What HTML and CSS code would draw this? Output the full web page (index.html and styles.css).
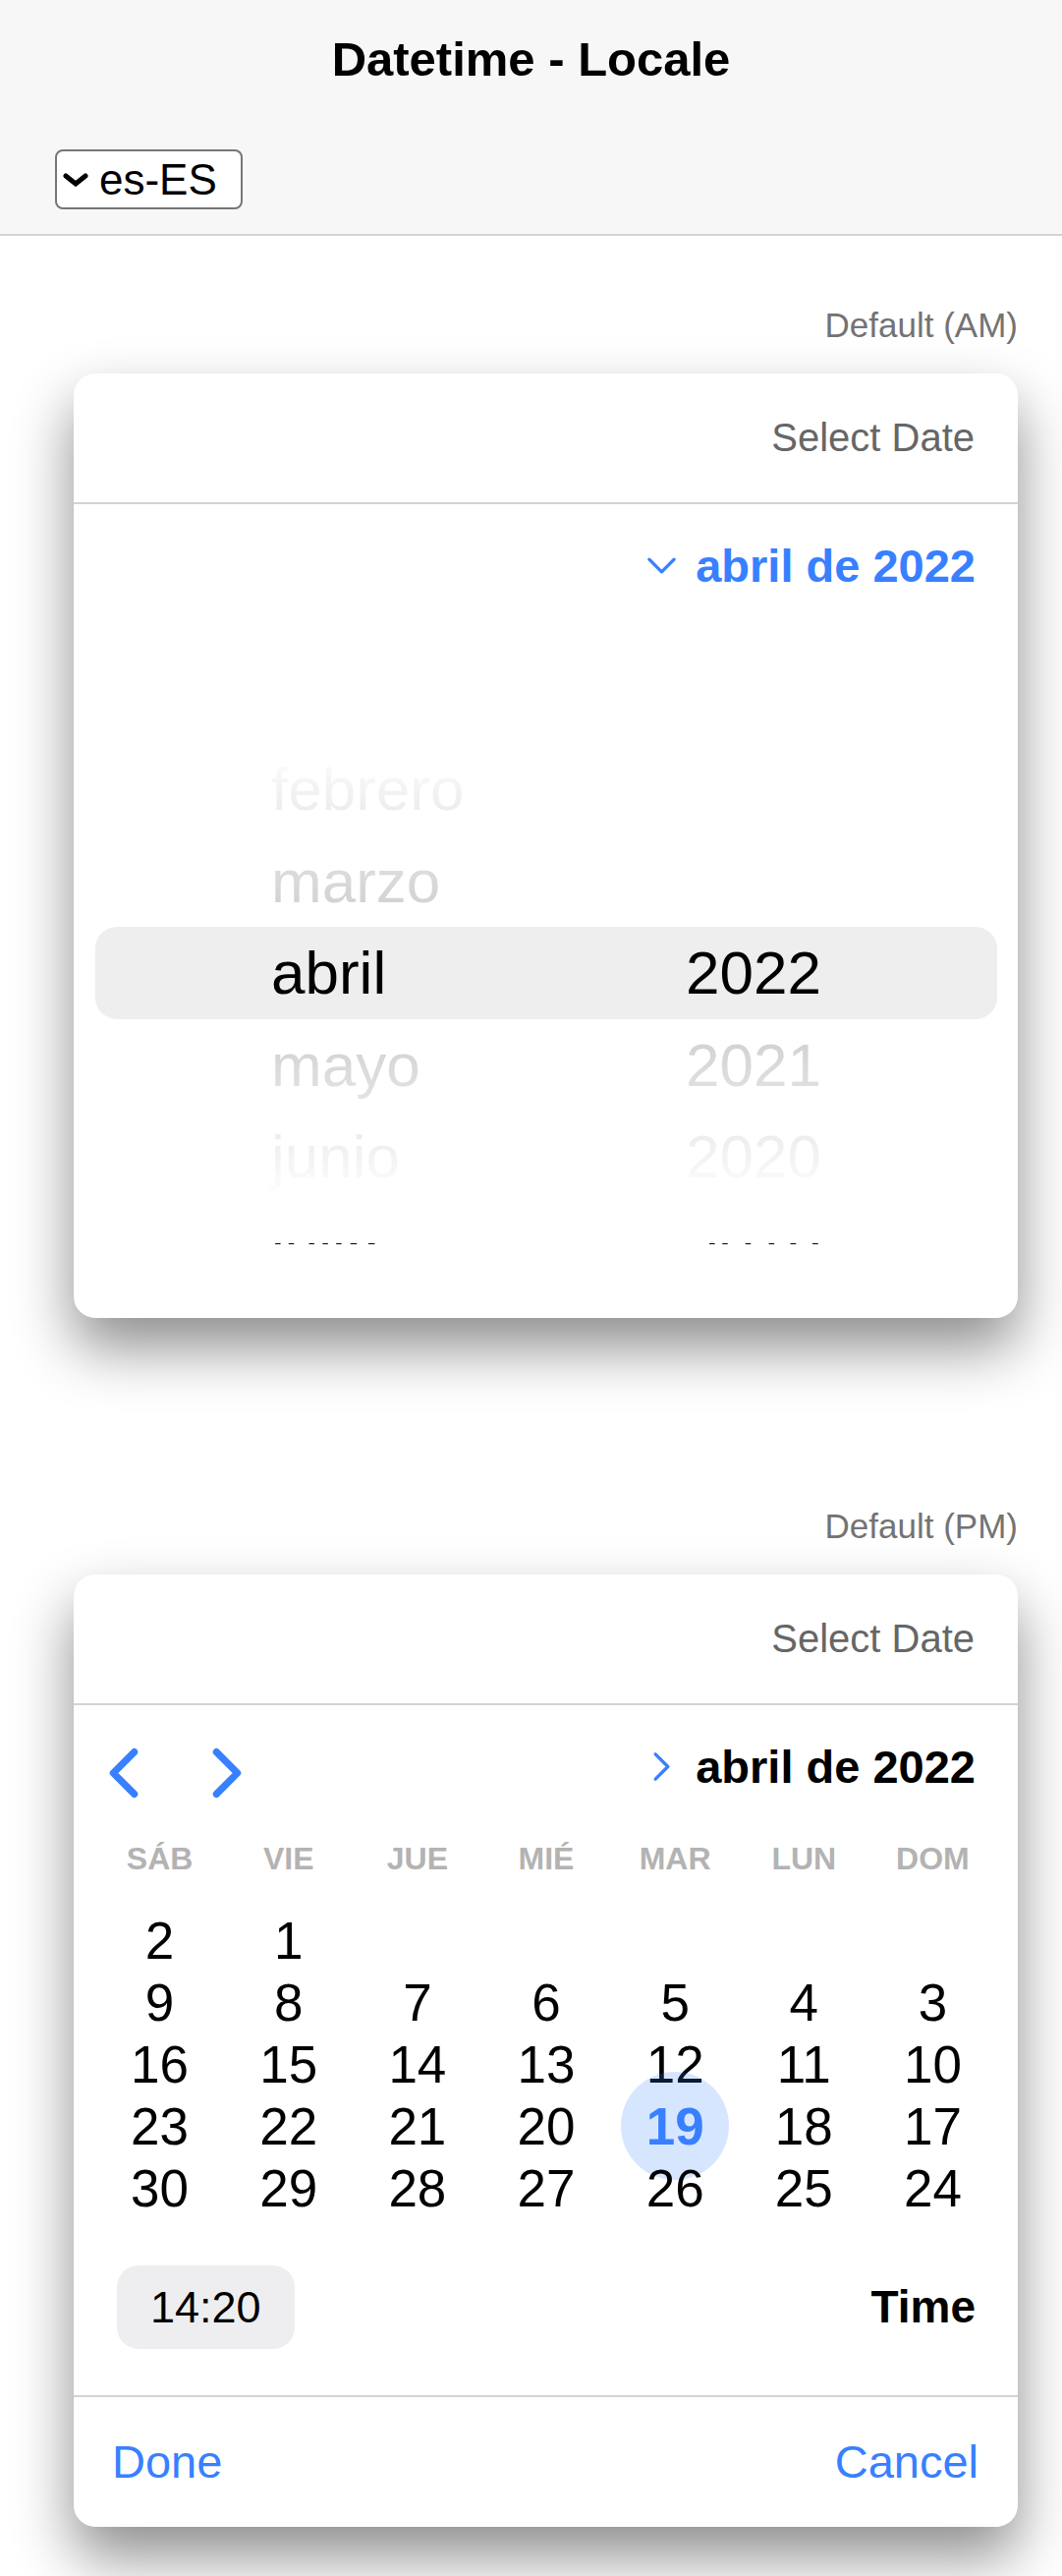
FILE: index.html
```html
<!DOCTYPE html>
<html lang="es">
<head>
<meta charset="utf-8">
<title>Datetime - Locale</title>
<link rel="stylesheet" href="styles.css">
</head>
<body>
<header class="toolbar">
  <h1 class="toolbar-title">Datetime - Locale</h1>
  <div class="toolbar-controls">
    <div class="locale-select">
      <svg class="select-arrow" viewBox="0 0 28 14" width="28" height="14" aria-hidden="true"><polyline points="4,3 14,11 24,3"/></svg>
      <span>es-ES</span>
    </div>
  </div>
</header>

<main class="content">
  <section class="demo">
    <div class="demo-label">Default (AM)</div>
    <div class="datetime">
      <div class="dt-title">Select Date</div>
      <div class="dt-header">
        <div class="month-toggle is-open">
          <svg class="toggle-icon" viewBox="0 0 512 512" width="45" height="45" aria-hidden="true"><path d="M112 184l144 144 144-144"/></svg>
          <span>abril de 2022</span>
        </div>
      </div>
      <div class="wheel">
        <div class="wheel-viewport">
          <div class="wheel-list">
            <div class="wheel-row"><span>febrero</span><span></span></div>
            <div class="wheel-row"><span>marzo</span><span></span></div>
            <div class="wheel-row is-active"><span>abril</span><span>2022</span></div>
            <div class="wheel-row"><span>mayo</span><span>2021</span></div>
            <div class="wheel-row"><span>junio</span><span>2020</span></div>
            <div class="wheel-row"><span>julio</span><span>2019</span></div>
          </div>
          <div class="fade fade-top"></div>
          <div class="fade fade-bottom"></div>
        </div>
      </div>
    </div>
  </section>

  <section class="demo demo-pm">
    <div class="demo-label">Default (PM)</div>
    <div class="datetime">
      <div class="dt-title">Select Date</div>
      <div class="dt-header cal-header">
        <div class="nav">
          <svg class="nav-icon" viewBox="0 0 512 512" width="76" height="76" aria-hidden="true"><path d="M328 112L184 256l144 144"/></svg>
          <svg class="nav-icon" viewBox="0 0 512 512" width="76" height="76" aria-hidden="true"><path d="M184 112l144 144-144 144"/></svg>
        </div>
        <div class="month-toggle is-closed">
          <svg class="toggle-icon" viewBox="0 0 512 512" width="45" height="45" aria-hidden="true"><path d="M184 112l144 144-144 144"/></svg>
          <span>abril de 2022</span>
        </div>
      </div>

      <div class="weekdays" dir="rtl">
        <div>DOM</div><div>LUN</div><div>MAR</div><div>MIÉ</div><div>JUE</div><div>VIE</div><div>SÁB</div>
      </div>

      <div class="days" dir="rtl">
        <div class="day"></div><div class="day"></div><div class="day"></div><div class="day"></div><div class="day"></div>
        <div class="day"><span>1</span></div><div class="day"><span>2</span></div>
        <div class="day"><span>3</span></div><div class="day"><span>4</span></div><div class="day"><span>5</span></div><div class="day"><span>6</span></div><div class="day"><span>7</span></div><div class="day"><span>8</span></div><div class="day"><span>9</span></div>
        <div class="day"><span>10</span></div><div class="day"><span>11</span></div><div class="day"><span>12</span></div><div class="day"><span>13</span></div><div class="day"><span>14</span></div><div class="day"><span>15</span></div><div class="day"><span>16</span></div>
        <div class="day"><span>17</span></div><div class="day"><span>18</span></div><div class="day"><span class="is-today">19</span></div><div class="day"><span>20</span></div><div class="day"><span>21</span></div><div class="day"><span>22</span></div><div class="day"><span>23</span></div>
        <div class="day"><span>24</span></div><div class="day"><span>25</span></div><div class="day"><span>26</span></div><div class="day"><span>27</span></div><div class="day"><span>28</span></div><div class="day"><span>29</span></div><div class="day"><span>30</span></div>
      </div>

      <div class="time-row">
        <div class="time-chip">14:20</div>
        <div class="time-label">Time</div>
      </div>

      <div class="dt-buttons">
        <span class="dt-button">Done</span>
        <span class="dt-button">Cancel</span>
      </div>
    </div>
  </section>
</main>
</body>
</html>
```

FILE: styles.css
```css
* {
  box-sizing: border-box;
}

html, body {
  margin: 0;
  padding: 0;
  background: #ffffff;
}

body {
  font-family: "Liberation Sans", Arial, Helvetica, sans-serif;
  color: #000000;
}

/* ---------- Toolbar ---------- */
.toolbar {
  background: #f7f7f7;
  border-bottom: 2px solid #d4d4d4;
  height: 240px;
}

.toolbar-title {
  margin: 0;
  height: 120px;
  line-height: 120px;
  text-align: center;
  font-size: 49px;
  font-weight: 700;
  color: #000;
}

.toolbar-controls {
  padding: 32px 0 0 56px;
}

.locale-select {
  display: flex;
  align-items: center;
  width: 191px;
  height: 61px;
  border: 2px solid #767676;
  border-radius: 8px;
  background: #ffffff;
  padding-left: 5px;
  font-size: 44px;
  color: #000;
}

.select-arrow {
  flex: none;
  margin-right: 10px;
  fill: none;
  stroke: #000;
  stroke-width: 5;
  stroke-linecap: round;
  stroke-linejoin: miter;
}

/* ---------- Content ---------- */
.content {
  padding: 70px 0 60px;
}

.demo {
  display: flex;
  flex-direction: column;
  align-items: flex-end;
  padding: 0 45px;
}

.demo-pm {
  margin-top: 191px;
}

.demo-label {
  font-size: 35px;
  line-height: 42px;
  color: #737373;
  margin-bottom: 28px;
}

.datetime {
  width: 961px;
  background: #ffffff;
  border-radius: 22px;
  box-shadow: 0 30px 60px rgba(0, 0, 0, 0.45);
  overflow: hidden;
}

.dt-title {
  height: 133px;
  border-bottom: 2px solid #d3d3d3;
  display: flex;
  align-items: center;
  justify-content: flex-end;
  padding-right: 44px;
  font-size: 40px;
  color: #666666;
}

.dt-header {
  height: 124px;
  display: flex;
  align-items: center;
  justify-content: space-between;
  padding: 0 43px 0 13px;
}

.month-toggle {
  margin-left: auto;
  display: flex;
  align-items: center;
  gap: 12px;
  font-size: 47px;
  font-weight: 700;
}

.month-toggle.is-open {
  color: #3880ff;
}

.month-toggle.is-closed {
  color: #000000;
}

.toggle-icon {
  flex: none;
  fill: none;
  stroke: #3880ff;
  stroke-width: 38;
  stroke-linecap: round;
  stroke-linejoin: round;
}

.nav {
  display: flex;
  gap: 29px;
  margin-top: 14px;
}

.nav-icon {
  display: block;
  fill: none;
  stroke: #3880ff;
  stroke-width: 48;
  stroke-linecap: round;
  stroke-linejoin: round;
}

/* ---------- Wheel picker ---------- */
.wheel {
  padding: 78px 0 75px;
}

.wheel-viewport {
  position: relative;
  height: 551px;
  overflow: hidden;
}

.wheel-list {
  padding-top: 41px;
}

.wheel-row {
  display: flex;
  justify-content: space-between;
  align-items: center;
  height: 93.5px;
  margin: 0 21px 0 22px;
  padding: 0 179px;
  font-size: 62px;
  color: #000000;
  border-radius: 22px;
}

.wheel-row.is-active {
  background: #eeeeee;
}

.fade {
  position: absolute;
  left: 0;
  right: 0;
  pointer-events: none;
}

.fade-top {
  top: 0;
  height: 228px;
  background: linear-gradient(to bottom, #ffffff 20%, rgba(255, 255, 255, 0.8) 100%);
}

.fade-bottom {
  top: 321.5px;
  height: 228.5px;
  background: linear-gradient(to top, #ffffff 20%, rgba(255, 255, 255, 0.8) 100%);
}

/* ---------- Calendar ---------- */
.weekdays {
  display: grid;
  grid-template-columns: repeat(7, 1fr);
  height: 60px;
  margin: 2px 21px 0 22px;
  align-items: center;
  text-align: center;
  font-size: 32px;
  font-weight: 700;
  color: #b3b3b3;
}

.days {
  display: grid;
  grid-template-columns: repeat(7, 1fr);
  grid-auto-rows: 63px;
  margin: 21.5px 21px 0 22px;
}

.day {
  display: flex;
  align-items: center;
  justify-content: center;
  font-size: 53px;
  color: #000000;
}

.day .is-today {
  flex: none;
  display: flex;
  align-items: center;
  justify-content: center;
  width: 110px;
  height: 110px;
  border-radius: 50%;
  background: rgba(56, 128, 255, 0.2);
  color: #3880ff;
  font-weight: 700;
}

.time-row {
  height: 179px;
  display: flex;
  align-items: center;
  justify-content: space-between;
  padding: 0 43px 0 44px;
}

.time-chip {
  height: 85px;
  line-height: 85px;
  padding: 0 34px;
  border-radius: 22px;
  background: rgba(118, 118, 128, 0.12);
  font-size: 45px;
  color: #000000;
}

.time-label {
  font-size: 46px;
  font-weight: 700;
  color: #000000;
}

.dt-buttons {
  height: 134px;
  border-top: 2px solid #d3d3d3;
  display: flex;
  align-items: center;
  justify-content: space-between;
  padding: 0 40px 0 39px;
}

.dt-button {
  font-size: 47px;
  color: #3880ff;
}
```
